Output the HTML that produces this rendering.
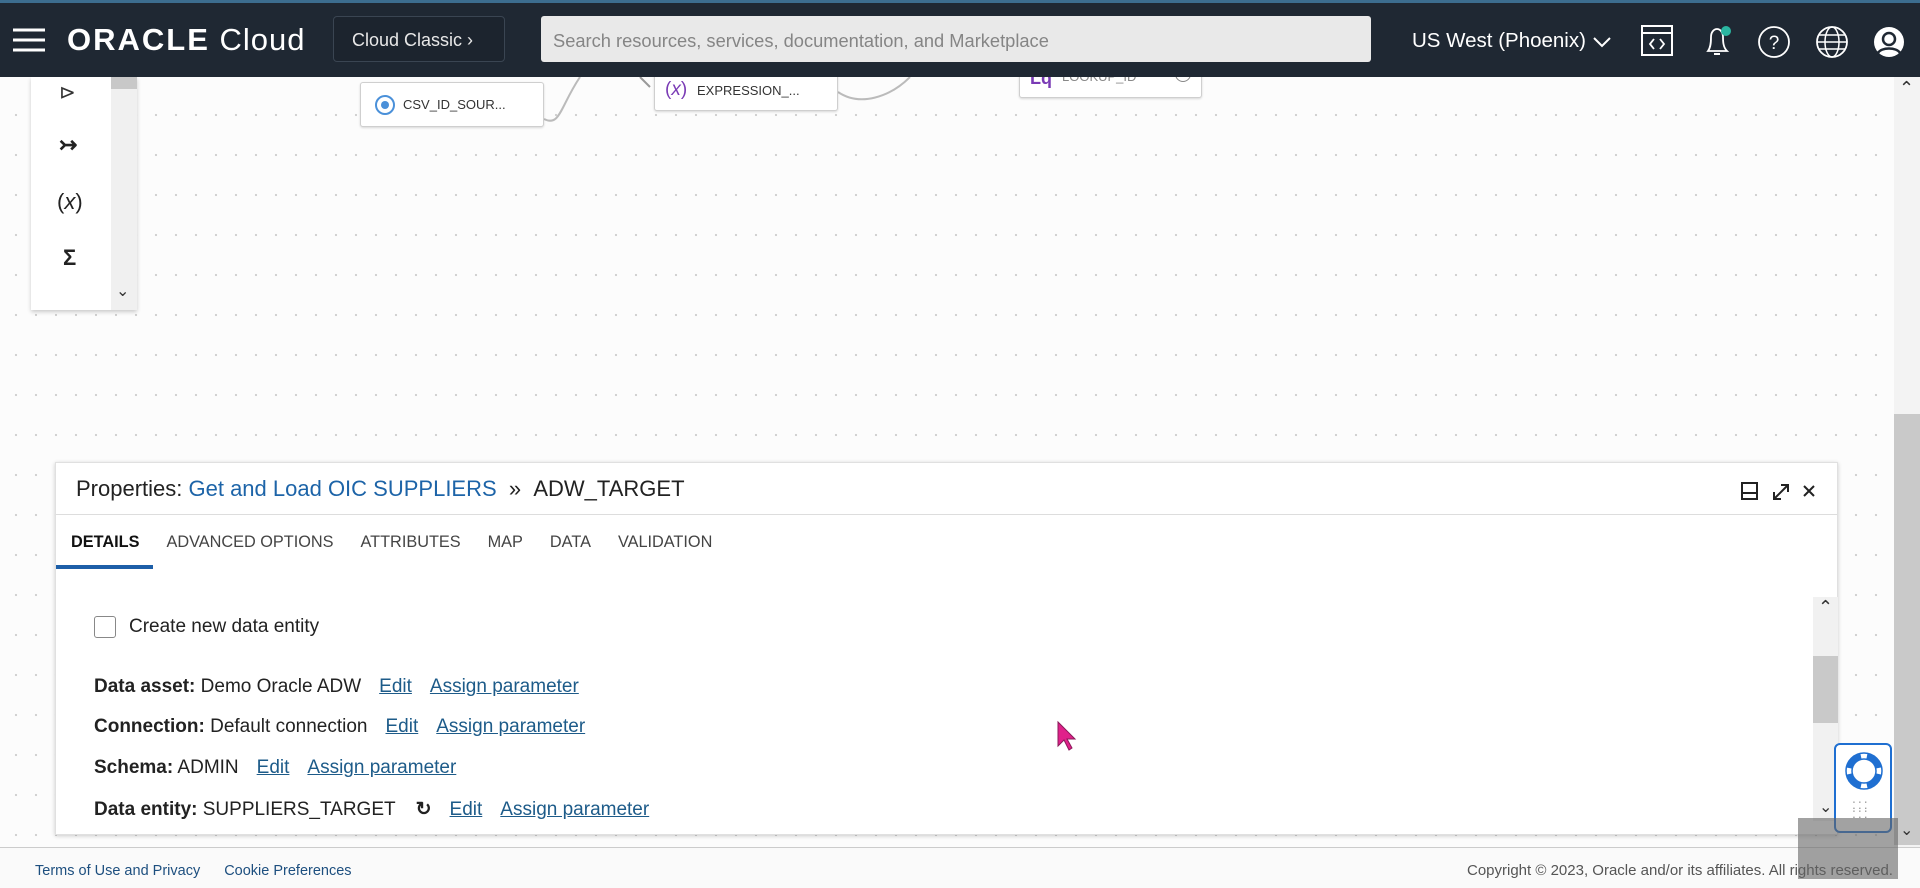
<!DOCTYPE html>
<html><head><meta charset="utf-8"><style>
*{box-sizing:border-box;margin:0;padding:0}
body{width:1920px;height:888px;overflow:hidden;background:#fff;font-family:"Liberation Sans",Arial,sans-serif;position:relative;color:#161513}
.hdr{position:absolute;left:0;top:0;width:1920px;height:77px;background:#1f2833;border-top:3px solid #3c6d8f}
.abs{position:absolute}
.canvas{position:absolute;left:0;top:77px;width:1894px;height:770px;background-color:#fcfcfc;background-image:radial-gradient(circle,#cfcfcf 1px,transparent 1.3px);background-size:20px 40px;background-position:6px 18px}
.node{position:absolute;background:#fff;border:1px solid #cfcfcf;border-radius:3px;box-shadow:0 1px 2px rgba(0,0,0,.15);font-size:13px;color:#333}
.panel{position:absolute;left:55px;top:462px;width:1783px;height:373px;background:#fff;border:1px solid #e0e0e0;box-shadow:0 1px 4px rgba(0,0,0,.2)}
.lnk{color:#1d5b89;text-decoration:underline}
.row{position:absolute;left:94px;font-size:19px;color:#222}
.row .lnk{margin-left:18px}
</style></head><body>
<div class="canvas"></div>
<div class="abs" style="left:31px;top:77px;width:106px;height:233px;background:#fff;box-shadow:0 2px 4px rgba(0,0,0,.2)">
 <div class="abs" style="left:80px;top:0;width:26px;height:233px;background:#f0f0f0"></div>
 <div class="abs" style="left:80px;top:0;width:26px;height:12px;background:#c8c8c8"></div>
 <div class="abs" style="left:85px;top:204px;font-size:16px;color:#333">&#8964;</div>
 <div class="abs" style="left:28px;top:3px;font-size:20px;color:#333">⊳</div>
 <div class="abs" style="left:28px;top:55px;font-size:22px;font-weight:bold;color:#222">&#8611;</div>
 <div class="abs" style="left:26px;top:112px;font-size:22px;color:#222">(<i>x</i>)</div>
 <div class="abs" style="left:32px;top:168px;font-size:22px;font-weight:bold;color:#222">Σ</div>
</div>
<svg class="abs" style="left:0;top:77px" width="1300" height="60"><path d="M544 42 C560 50 560 30 580 0" fill="none" stroke="#bbb" stroke-width="2"/><path d="M838 15 C860 30 890 20 910 0" fill="none" stroke="#bbb" stroke-width="2"/><path d="M640 0 L650 10" stroke="#999" stroke-width="2"/></svg>
<div class="node" style="left:360px;top:82px;width:184px;height:45px"><svg class="abs" style="left:13px;top:11px" width="22" height="22"><circle cx="11" cy="11" r="9" fill="none" stroke="#4a90d9" stroke-width="2"/><circle cx="11" cy="11" r="4" fill="#4a90d9"/></svg><span class="abs" style="left:42px;top:14px">CSV_ID_SOUR...</span></div>
<div class="node" style="left:654px;top:70px;width:184px;height:41px"><span class="abs" style="left:10px;top:8px;color:#7a3bb5;font-size:19px">(<i>x</i>)</span><span class="abs" style="left:42px;top:12px">EXPRESSION_...</span></div>
<div class="node" style="left:1019px;top:60px;width:183px;height:38px"><span class="abs" style="left:10px;top:7px;color:#7a3bb5;font-size:18px;font-weight:bold">Lq</span><span class="abs" style="left:42px;top:8px;color:#888">LOOKUP_ID</span><span class="abs" style="left:155px;top:5px;width:16px;height:16px;border:1.5px solid #888;border-radius:50%"></span></div>
<div class="hdr">
 <svg class="abs" style="left:12px;top:25px" width="34" height="24"><path d="M1 2H33M1 12H33M1 22H33" stroke="#fff" stroke-width="3"/></svg>
 <div class="abs" style="left:67px;top:19px;color:#fff;font-size:31px;letter-spacing:1px"><b style="letter-spacing:2px">ORACLE</b> Cloud</div>
 <div class="abs" style="left:333px;top:13px;width:172px;height:46px;border:1px solid #3a4552;border-radius:4px;background:#1c242e;color:#e8e8e8;font-size:18px;padding:13px 0 0 18px">Cloud Classic &#x203A;</div>
 <div class="abs" style="left:541px;top:13px;width:830px;height:46px;background:#e9e9e9;border-radius:3px;color:#858585;font-size:18.3px;padding:14px 0 0 12px">Search resources, services, documentation, and Marketplace</div>
 <div class="abs" style="left:1412px;top:26px;color:#fff;font-size:20.5px">US West (Phoenix) <svg width="20" height="12" style="vertical-align:middle"><path d="M2 2L10 10L18 2" fill="none" stroke="#fff" stroke-width="2"/></svg></div>
 <svg class="abs" style="left:1640px;top:20px" width="34" height="34"><rect x="2" y="3" width="30" height="29" fill="none" stroke="#fff" stroke-width="2"/><path d="M2 10H32" stroke="#fff" stroke-width="2"/><path d="M14 16L10 21L14 26M20 16L24 21L20 26" fill="none" stroke="#fff" stroke-width="1.8"/></svg>
 <svg class="abs" style="left:1700px;top:20px" width="36" height="36"><path d="M8 28C11 24 11 18 11 14C11 9 14 6 17 6C20 6 23 9 23 14C23 18 23 24 27 28Z" fill="none" stroke="#fff" stroke-width="1.8"/><path d="M14 31H20" stroke="#fff" stroke-width="2"/><circle cx="26" cy="8" r="5" fill="#2ab5a0"/></svg>
 <svg class="abs" style="left:1757px;top:22px" width="34" height="34"><circle cx="17" cy="17" r="15" fill="none" stroke="#fff" stroke-width="1.8"/><text x="17" y="24" font-size="19" fill="#fff" text-anchor="middle" font-family="Liberation Sans">?</text></svg>
 <svg class="abs" style="left:1815px;top:22px" width="34" height="34"><circle cx="17" cy="17" r="15" fill="none" stroke="#fff" stroke-width="1.8"/><ellipse cx="17" cy="17" rx="7" ry="15" fill="none" stroke="#fff" stroke-width="1.5"/><path d="M2 17H32M4 10H30M4 24H30" stroke="#fff" stroke-width="1.5"/></svg>
 <svg class="abs" style="left:1872px;top:22px" width="34" height="34"><circle cx="17" cy="17" r="15" fill="#fff"/><circle cx="17" cy="14" r="6" fill="none" stroke="#1f2833" stroke-width="2.5"/><path d="M6 28C9 22 25 22 28 28" fill="none" stroke="#1f2833" stroke-width="2.5"/></svg>
</div>
<div class="abs" style="left:1894px;top:77px;width:26px;height:770px;background:#f3f3f3"></div>
<div class="abs" style="left:1894px;top:414px;width:26px;height:431px;background:#c9c9c9"></div>
<div class="abs" style="left:1899px;top:78px;font-size:18px;color:#333">&#8963;</div>
<div class="panel">
 <div class="abs" style="left:20px;top:13px;font-size:22px;color:#222">Properties: <span style="color:#1d64a8">Get and Load OIC SUPPLIERS</span> &nbsp;» &nbsp;ADW_TARGET</div>
 <svg class="abs" style="left:1683px;top:17px" width="90" height="22"><rect x="3" y="3" width="15" height="16" fill="none" stroke="#222" stroke-width="2"/><path d="M3 13H18" stroke="#222" stroke-width="2"/><path d="M35 19L49 5M42 5H49V12M35 12V19H42" fill="none" stroke="#222" stroke-width="2"/><path d="M65 6L75 16M75 6L65 16" stroke="#222" stroke-width="2"/></svg>
 <div class="abs" style="left:0;top:51px;width:1781px;height:1px;background:#ddd"></div>
 <div class="abs" style="left:15px;top:70px;font-size:16.3px;color:#444"><b style="color:#111">DETAILS</b><span style="margin-left:27px">ADVANCED OPTIONS</span><span style="margin-left:27px">ATTRIBUTES</span><span style="margin-left:27px">MAP</span><span style="margin-left:27px">DATA</span><span style="margin-left:27px">VALIDATION</span></div>
 <div class="abs" style="left:0;top:102px;width:97px;height:4px;background:#1d5fa8"></div>
 <div class="abs" style="left:1757px;top:134px;width:25px;height:224px;background:#f1f1f1"></div>
 <div class="abs" style="left:1757px;top:193px;width:25px;height:67px;background:#c9c9c9"></div>
 <div class="abs" style="left:1762px;top:134px;font-size:18px;color:#333">&#8963;</div>
 <div class="abs" style="left:1763px;top:334px;font-size:16px;color:#333">&#8964;</div>
</div>
<div class="abs" style="left:94px;top:616px;width:22px;height:22px;border:1.5px solid #888;border-radius:3px;background:#fff"></div>
<div class="row" style="left:129px;top:616px">Create new data entity</div>
<div class="row" style="top:676px"><b>Data asset:</b> Demo Oracle ADW<span class="lnk">Edit</span><span class="lnk">Assign parameter</span></div>
<div class="row" style="top:716px"><b>Connection:</b> Default connection<span class="lnk">Edit</span><span class="lnk">Assign parameter</span></div>
<div class="row" style="top:757px"><b>Schema:</b> ADMIN<span class="lnk">Edit</span><span class="lnk">Assign parameter</span></div>
<div class="row" style="top:798px"><b>Data entity:</b> SUPPLIERS_TARGET<span style="margin-left:20px;font-weight:bold">&#x21BB;</span><span class="lnk">Edit</span><span class="lnk">Assign parameter</span></div>
<svg class="abs" style="left:1056px;top:720px" width="22" height="32"><path d="M2 2L2 26L8 20L13 30L16 28L11 19L19 19Z" fill="#e0218a" stroke="#8a1a5a" stroke-width="1"/></svg>
<div class="abs" style="left:0;top:847px;width:1920px;height:41px;background:#fafafa;border-top:1px solid #ccc"></div>
<div class="abs" style="left:35px;top:863px;font-size:14.5px;color:#1d4f7f">Terms of Use and Privacy<span style="margin-left:24px">Cookie Preferences</span></div>
<div class="abs" style="left:1467px;top:862px;font-size:15px;color:#555">Copyright © 2023, Oracle and/or its affiliates. All rights reserved.</div>
<div class="abs" style="left:1834px;top:743px;width:58px;height:90px;border:2px solid #1f6fd1;border-radius:6px;background:#fff">
 <svg class="abs" style="left:8px;top:6px" width="40" height="40"><circle cx="20" cy="20" r="15" fill="none" stroke="#1f6fd1" stroke-width="6"/><circle cx="20" cy="20" r="15" fill="none" stroke="#fff" stroke-width="6" stroke-dasharray="6 17.5" stroke-dashoffset="3"/><circle cx="20" cy="20" r="18" fill="none" stroke="#1f6fd1" stroke-width="1.5"/><circle cx="20" cy="20" r="12" fill="none" stroke="#1f6fd1" stroke-width="1.5"/></svg>
 <div class="abs" style="left:16px;top:55px;font-size:14px;color:#999;letter-spacing:2px;line-height:9px">:::<br>:::</div>
</div>
<div class="abs" style="left:1798px;top:818px;width:100px;height:61px;background:rgba(100,100,100,.6)"></div>
<div class="abs" style="left:1900px;top:820px;font-size:16px;color:#333">&#8964;</div>
</body></html>
